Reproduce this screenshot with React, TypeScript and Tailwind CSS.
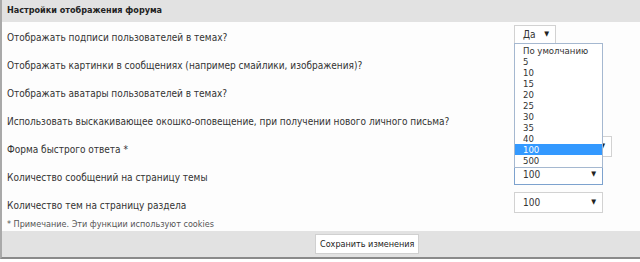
import React from "react";

const font = { fontFamily: "'DejaVu Sans Condensed', 'DejaVu Sans', Verdana, sans-serif" };

const rows = [
  "Отображать подписи пользователей в темах?",
  "Отображать картинки в сообщениях (например смайлики, изображения)?",
  "Отображать аватары пользователей в темах?",
  "Использовать выскакивающее окошко-оповещение, при получении нового личного письма?",
  "Форма быстрого ответа *",
  "Количество сообщений на страницу темы",
  "Количество тем на страницу раздела",
];

const options = ["По умолчанию", "5", "10", "15", "20", "25", "30", "35", "40", "100", "500"];

const Arrow = () => <span className="text-[7px] leading-none text-[#222]">▼</span>;

const Select = ({ value, width, focused }: { value: string; width: string; focused?: boolean }) => (
  <div
    className={`flex h-[21px] items-center justify-between bg-white pl-[8px] pr-[6px] text-[10px] text-[#333] ${width} ${
      focused ? "border border-[#7da2ce]" : "border border-[#d2d2d2]"
    }`}
  >
    <span>{value}</span>
    <Arrow />
  </div>
);

export default function App() {
  return (
    <div className="h-[262px] w-[640px] overflow-hidden bg-white" style={font}>
      <div className="border-b-2 border-l-2 border-b-[#8a8a8a] border-l-[#a9a9a9] bg-[#fdfdfd]">
        <div className="flex h-[22px] items-center bg-[#e2e2e2] pl-[5px] text-[9px] font-bold text-[#222]">
          Настройки отображения форума
        </div>

        {rows.map((label, i) => (
          <div key={i} className="flex h-[28px] items-center">
            <div className="w-[512px] whitespace-nowrap pl-[5px] pt-[3px] text-[10px] text-[#333]">{label}</div>
            <div className="relative mb-[4px]">
              {i === 0 && (
                <>
                  <div className="flex h-[19px] w-[42px] items-center justify-between border border-[#d2d2d2] bg-white pl-[8px] pr-[6px] text-[10px] text-[#333]">
                    <span>Да</span>
                    <Arrow />
                  </div>
                  <div className="absolute left-0 top-[18px] z-10 w-[89px] border border-[#a5b8d0] bg-white py-[1px]">
                    {options.map((o) => (
                      <div
                        key={o}
                        className={`h-[11px] pl-[8px] text-[9.5px] leading-[11px] ${
                          o === "100" ? "bg-[#3399ff] text-white" : "text-[#333]"
                        }`}
                      >
                        {o}
                      </div>
                    ))}
                  </div>
                </>
              )}
              {i === 4 && <Select value="Да" width="w-[98px]" />}
              {i === 5 && <Select value="100" width="w-[89px]" focused />}
              {i === 6 && <Select value="100" width="w-[89px]" />}
            </div>
          </div>
        ))}

        <div className="h-[12px] pl-[5px] text-[9px] leading-[12px] text-[#555]">
          * Примечание. Эти функции используют cookies
        </div>

        <div className="mt-[1px] flex h-[26px] items-center bg-[#e2e2e2] pl-[313px]">
          <button className="h-[20px] border border-[#d0d0d0] bg-white px-[4px] text-[9px] leading-[18px] text-[#222]">
            Сохранить изменения
          </button>
        </div>
      </div>
    </div>
  );
}
